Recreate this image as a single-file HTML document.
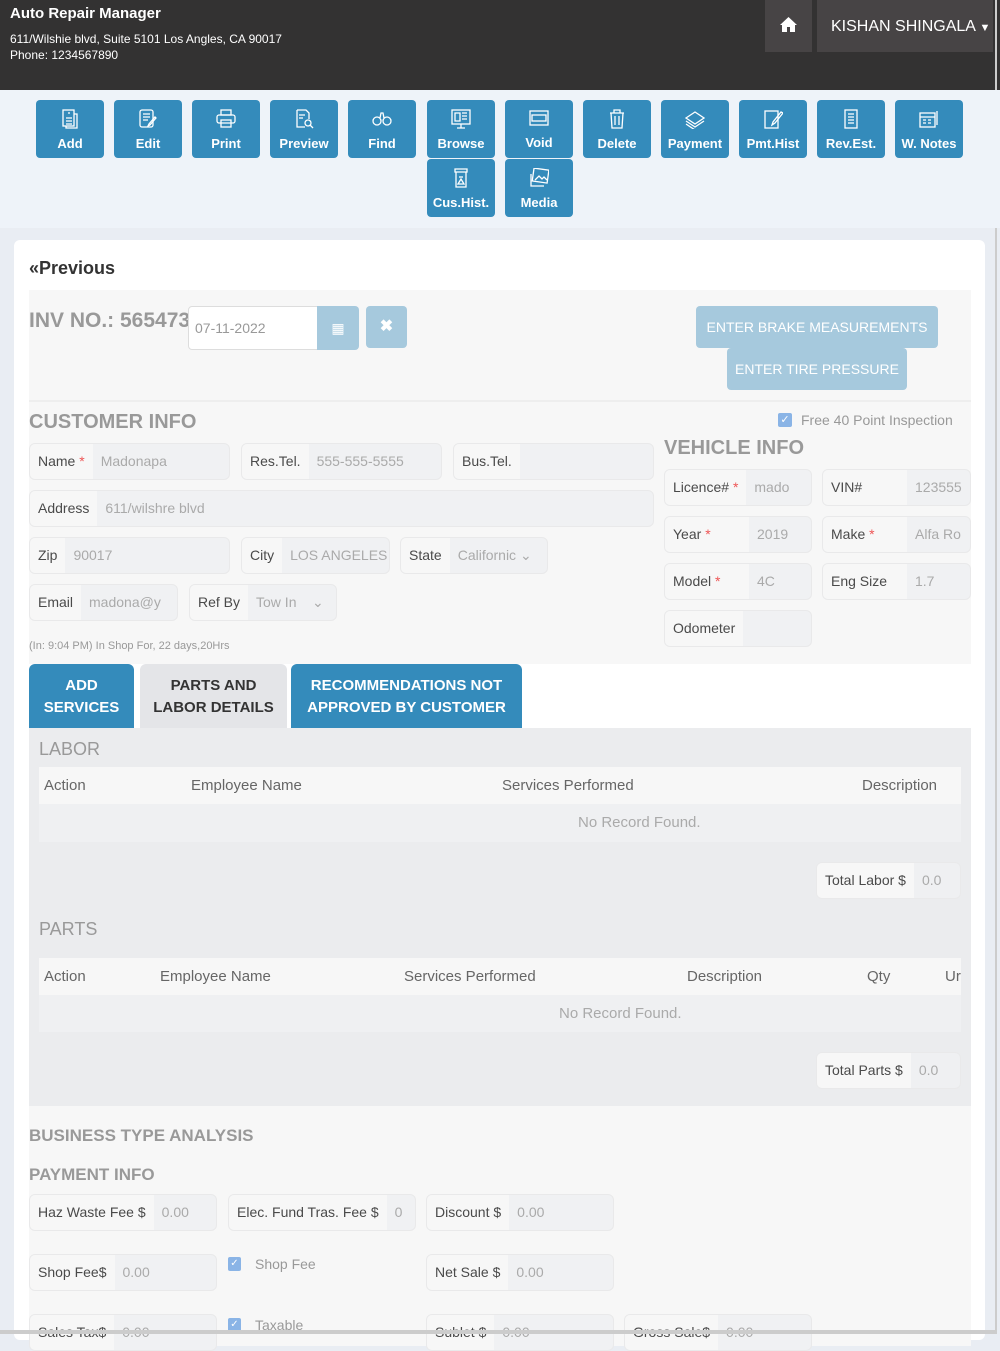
<!DOCTYPE html>
<html><head><meta charset="utf-8">
<style>
*{box-sizing:border-box;margin:0;padding:0}
body{width:1000px;height:1334px;overflow:hidden;background:#e9edf3;font-family:"Liberation Sans",sans-serif;position:relative;color:#444}
.a{position:absolute}
.hdr{left:0;top:0;width:1000px;height:90px;background:#333232;color:#fff}
.tb{left:0;top:90px;width:1000px;height:138px;background:#eef3f9}
.btn{position:absolute;width:68px;height:58px;background:#348bbb;border-radius:4px;color:#fff;font-size:13px;font-weight:bold;text-align:center}
.btn svg{position:absolute;left:24px;top:9px}
.btn span{position:absolute;left:0;right:0;top:36px}
.card{left:14px;top:240px;width:971px;height:1100px;background:#fff;border-radius:6px}
.f{position:absolute;height:37px;border:1px solid #e9e9ea;border-radius:6px;background:#f0f1f3;overflow:hidden;font-size:14px;white-space:nowrap}
.f b{display:inline-block;height:35px;line-height:35px;padding:0 8px;background:#f7f7f7;color:#4a4a4a;font-weight:normal;vertical-align:top}
.f i{font-style:normal;display:inline-block;line-height:35px;padding-left:8px;color:#aaa}
.r{color:#e55}
.h{font-weight:bold;color:#999;font-size:20px}
.lb{background:#a6c9dd;color:#fff;font-size:14px;text-align:center;border-radius:4px;line-height:42px}
.tab{position:absolute;top:664px;height:65px;border-radius:6px 6px 0 0;font-weight:bold;font-size:15px;text-align:center;line-height:22px;padding-top:11px}
.th{position:absolute;font-size:15px;color:#666}
</style></head><body>
<div class="a hdr">
 <div class="a" style="left:10px;top:5px;font-size:15px;font-weight:bold">Auto Repair Manager</div>
 <div class="a" style="left:10px;top:32px;font-size:12px">611/Wilshie blvd, Suite 5101 Los Angles, CA 90017</div>
 <div class="a" style="left:10px;top:48px;font-size:12px">Phone: 1234567890</div>
 <div class="a" style="left:765px;top:0;width:47px;height:52px;background:#474445">
  <svg class="a" style="left:14px;top:16px" width="19" height="17" viewBox="0 0 19 17"><path d="M9.5 1 L1 9 L3 9 L3 16 L8 16 L8 11 L11 11 L11 16 L16 16 L16 9 L18 9 Z" fill="#fff"/></svg>
 </div>
 <div class="a" style="left:817px;top:0;width:176px;height:52px;background:#474445;font-size:16px;line-height:54px;padding-left:14px">KISHAN SHINGALA <span style="font-size:11px">&#9660;</span></div>
 <div class="a" style="left:995px;top:0;width:2px;height:1334px;background:#ccc"></div>
</div>
<div class="a tb">
 <div class="btn" style="left:36px;top:10px"><svg width="20" height="20" viewBox="0 0 20 20" fill="none" stroke="#fff" stroke-width="1.3"><rect x="3" y="1" width="11" height="16"/><path d="M14 5h3v14H6v-2M6 9h6M6 12h6M6 15h6M8 4h2"/></svg><span>Add</span></div>
 <div class="btn" style="left:114px;top:10px"><svg width="20" height="20" viewBox="0 0 20 20" fill="none" stroke="#fff" stroke-width="1.3"><rect x="2" y="1" width="13" height="17" rx="2"/><path d="M5 5h7M5 8h7M5 11h5M18 9l-6 7-2 1 1-2 6-7z"/></svg><span>Edit</span></div>
 <div class="btn" style="left:192px;top:10px"><svg width="20" height="20" viewBox="0 0 20 20" fill="none" stroke="#fff" stroke-width="1.3"><rect x="5" y="1" width="10" height="5"/><rect x="1" y="6" width="18" height="8" rx="2"/><rect x="5" y="11" width="10" height="7"/></svg><span>Print</span></div>
 <div class="btn" style="left:270px;top:10px"><svg width="20" height="20" viewBox="0 0 20 20" fill="none" stroke="#fff" stroke-width="1.3"><path d="M3 1h9l3 3v6M3 1v17h8M5 6h6M5 9h4"/><circle cx="14" cy="14" r="3"/><path d="M16 16l3 3"/></svg><span>Preview</span></div>
 <div class="btn" style="left:348px;top:10px"><svg width="20" height="20" viewBox="0 0 20 20" fill="none" stroke="#fff" stroke-width="1.3"><circle cx="5" cy="12" r="4"/><circle cx="15" cy="12" r="4"/><path d="M8 9l1-5h2l1 5"/></svg><span>Find</span></div>
 <div class="btn" style="left:427px;top:10px"><svg width="20" height="20" viewBox="0 0 20 20" fill="none" stroke="#fff" stroke-width="1.3"><rect x="1" y="1" width="18" height="14"/><path d="M4 4h5v8H4zM11 4h5M11 7h5M11 10h5M10 15v4M6 19h8"/></svg><span>Browse</span></div>
 <div class="btn" style="left:505px;top:10px"><svg width="20" height="20" viewBox="0 0 20 20" fill="none" stroke="#fff" stroke-width="1.3"><rect x="1" y="2" width="18" height="14"/><rect x="3" y="6" width="14" height="6"/></svg><span style="top:35px">Void</span></div>
 <div class="btn" style="left:583px;top:10px"><svg width="20" height="20" viewBox="0 0 20 20" fill="none" stroke="#fff" stroke-width="1.3"><path d="M3 4h14M7 4V1h6v3M4 4l1 15h10l1-15M8 7v9M12 7v9"/></svg><span>Delete</span></div>
 <div class="btn" style="left:661px;top:10px"><svg width="20" height="20" viewBox="0 0 20 20" fill="none" stroke="#fff" stroke-width="1.3"><path d="M1 9l9-6 9 6-9 6zM1 12l9 6 9-6M1 15l9 6"/></svg><span>Payment</span></div>
 <div class="btn" style="left:739px;top:10px"><svg width="20" height="20" viewBox="0 0 20 20" fill="none" stroke="#fff" stroke-width="1.3"><rect x="2" y="2" width="13" height="17"/><path d="M18 3l-8 10-1 3 3-2 8-10z"/></svg><span>Pmt.Hist</span></div>
 <div class="btn" style="left:817px;top:10px"><svg width="20" height="20" viewBox="0 0 20 20" fill="none" stroke="#fff" stroke-width="1.3"><rect x="4" y="1" width="12" height="18"/><path d="M7 5h6M7 8h6M7 11h6M7 14h6"/></svg><span>Rev.Est.</span></div>
 <div class="btn" style="left:895px;top:10px"><svg width="20" height="20" viewBox="0 0 20 20" fill="none" stroke="#fff" stroke-width="1.3"><rect x="1" y="4" width="15" height="14"/><path d="M1 8h15M4 11h3M9 11h3M4 14h3M9 14h3M18 2v14"/></svg><span>W. Notes</span></div>
 <div class="btn" style="left:427px;top:69px"><svg width="20" height="20" viewBox="0 0 20 20" fill="none" stroke="#fff" stroke-width="1.3"><path d="M4 1h12v3H4zM5 4v15h10V4M8 9l4 0M7 16l3-5 3 5z"/></svg><span>Cus.Hist.</span></div>
 <div class="btn" style="left:505px;top:69px"><svg width="20" height="20" viewBox="0 0 20 20" fill="none" stroke="#fff" stroke-width="1.3"><rect x="4" y="1" width="15" height="13" transform="rotate(8 11 8)"/><path d="M2 6v12h13M6 12l4-4 3 3 2-2 3 3"/></svg><span>Media</span></div>
</div>
<div class="a card"></div>
<div class="a" style="left:29px;top:258px;font-size:18px;font-weight:bold;color:#333">«Previous</div>
<div class="a" style="left:29px;top:290px;width:942px;height:374px;background:#f7f7f7"></div>
<div class="a" style="left:29px;top:400px;width:942px;height:2px;background:#eee"></div>
<div class="a h" style="left:29px;top:309px;font-size:21px">INV NO.: 565473</div>
<div class="a" style="left:188px;top:306px;width:130px;height:44px;background:#fff;border:1px solid #ddd;border-radius:4px 0 0 4px;font-size:14px;color:#999;line-height:42px;padding-left:6px">07-11-2022</div>
<div class="a" style="left:317px;top:306px;width:42px;height:44px;background:#a6c9dd;border-radius:0 4px 4px 0;color:#fff;text-align:center;line-height:44px;font-size:14px">&#9638;</div>
<div class="a" style="left:366px;top:306px;width:41px;height:42px;background:#a6c9dd;border-radius:4px;color:#fff;text-align:center;line-height:42px;font-weight:bold">&#10006;</div>
<div class="a lb" style="left:696px;top:306px;width:242px">ENTER BRAKE MEASUREMENTS</div>
<div class="a lb" style="left:727px;top:348px;width:180px">ENTER TIRE PRESSURE</div>
<div class="a h" style="left:29px;top:411px">CUSTOMER INFO</div>
<div class="a" style="left:778px;top:413px;width:14px;height:14px;background:#8ab4e6;border-radius:2px;color:#fff;font-size:11px;text-align:center;line-height:14px">&#10003;</div>
<div class="a" style="left:801px;top:412px;font-size:14px;color:#999">Free 40 Point Inspection</div>
<div class="a h" style="left:664px;top:437px">VEHICLE INFO</div>

<div class="f" style="left:29px;top:443px;width:201px"><b>Name <span class="r">*</span></b><i>Madonapa</i></div>
<div class="f" style="left:241px;top:443px;width:201px"><b>Res.Tel.</b><i>555-555-5555</i></div>
<div class="f" style="left:453px;top:443px;width:201px"><b>Bus.Tel.</b><i></i></div>
<div class="f" style="left:29px;top:490px;width:625px"><b>Address</b><i>611/wilshre blvd</i></div>
<div class="f" style="left:29px;top:537px;width:201px"><b>Zip</b><i>90017</i></div>
<div class="f" style="left:241px;top:537px;width:149px"><b>City</b><i>LOS ANGELES</i></div>
<div class="f" style="left:400px;top:537px;width:148px"><b>State</b><i>Californic ⌄</i></div>
<div class="f" style="left:29px;top:584px;width:149px"><b>Email</b><i>madona@y</i></div>
<div class="f" style="left:189px;top:584px;width:148px"><b>Ref By</b><i>Tow In &nbsp;&nbsp;&nbsp;⌄</i></div>
<div class="a" style="left:29px;top:640px;font-size:11px;color:#999">(In: 9:04 PM) In Shop For, 22 days,20Hrs</div>

<div class="f" style="left:664px;top:469px;width:148px"><b>Licence# <span class="r">*</span></b><i>mado</i></div>
<div class="f" style="left:822px;top:469px;width:149px"><b style="width:84px">VIN#</b><i>123555</i></div>
<div class="f" style="left:664px;top:516px;width:148px"><b style="width:84px">Year <span class="r">*</span></b><i>2019</i></div>
<div class="f" style="left:822px;top:516px;width:149px"><b style="width:84px">Make <span class="r">*</span></b><i>Alfa Ro</i></div>
<div class="f" style="left:664px;top:563px;width:148px"><b style="width:84px">Model <span class="r">*</span></b><i>4C</i></div>
<div class="f" style="left:822px;top:563px;width:149px"><b style="width:84px">Eng Size</b><i>1.7</i></div>
<div class="f" style="left:664px;top:610px;width:148px"><b>Odometer</b><i></i></div>

<div class="tab" style="left:29px;width:105px;background:#348bbb;color:#fff">ADD<br>SERVICES</div>
<div class="tab" style="left:140px;width:147px;background:#e4e5e8;color:#333">PARTS AND<br>LABOR DETAILS</div>
<div class="tab" style="left:291px;width:231px;background:#348bbb;color:#fff">RECOMMENDATIONS NOT<br>APPROVED BY CUSTOMER</div>

<div class="a" style="left:29px;top:728px;width:942px;height:378px;background:#ebecee"></div>
<div class="a" style="left:39px;top:739px;font-size:18px;color:#999">LABOR</div>
<div class="a" style="left:39px;top:767px;width:922px;height:37px;background:#f7f7f7"></div>
<div class="a" style="left:39px;top:804px;width:922px;height:38px;background:#eff0f2"></div>
<div class="th" style="left:44px;top:777px">Action</div>
<div class="th" style="left:191px;top:777px">Employee Name</div>
<div class="th" style="left:502px;top:777px">Services Performed</div>
<div class="th" style="left:862px;top:777px">Description</div>
<div class="th" style="left:578px;top:814px;color:#aaa">No Record Found.</div>
<div class="f" style="left:816px;top:862px;width:145px;background:#eff0f2"><b>Total Labor $</b><i>0.0</i></div>

<div class="a" style="left:39px;top:919px;font-size:18px;color:#999">PARTS</div>
<div class="a" style="left:39px;top:958px;width:922px;height:37px;background:#f7f7f7"></div>
<div class="a" style="left:39px;top:995px;width:922px;height:37px;background:#eff0f2"></div>
<div class="th" style="left:44px;top:968px">Action</div>
<div class="th" style="left:160px;top:968px">Employee Name</div>
<div class="th" style="left:404px;top:968px">Services Performed</div>
<div class="th" style="left:687px;top:968px">Description</div>
<div class="th" style="left:867px;top:968px">Qty</div>
<div class="th" style="left:945px;top:968px">Ur</div>
<div class="th" style="left:559px;top:1005px;color:#aaa">No Record Found.</div>
<div class="f" style="left:816px;top:1052px;width:145px;background:#eff0f2"><b>Total Parts $</b><i>0.0</i></div>

<div class="a" style="left:29px;top:1106px;width:942px;height:240px;background:#f7f7f7"></div>
<div class="a" style="left:29px;top:1126px;font-size:17px;font-weight:bold;color:#999">BUSINESS TYPE ANALYSIS</div>
<div class="a" style="left:29px;top:1165px;font-size:17px;font-weight:bold;color:#999">PAYMENT INFO</div>
<div class="f" style="left:29px;top:1194px;width:188px"><b>Haz Waste Fee $</b><i>0.00</i></div>
<div class="f" style="left:228px;top:1194px;width:188px"><b>Elec. Fund Tras. Fee $</b><i>0</i></div>
<div class="f" style="left:426px;top:1194px;width:188px"><b>Discount $</b><i>0.00</i></div>
<div class="f" style="left:29px;top:1254px;width:188px"><b>Shop Fee$</b><i>0.00</i></div>
<div class="a" style="left:228px;top:1257px;width:13px;height:14px;background:#8ab4e6;border-radius:2px;color:#fff;font-size:10px;text-align:center;line-height:14px">&#10003;</div>
<div class="a" style="left:255px;top:1256px;font-size:14px;color:#999">Shop Fee</div>
<div class="f" style="left:426px;top:1254px;width:188px"><b>Net Sale $</b><i>0.00</i></div>
<div class="f" style="left:29px;top:1314px;width:188px"><b>Sales Tax$</b><i>0.00</i></div>
<div class="a" style="left:228px;top:1318px;width:13px;height:14px;background:#8ab4e6;border-radius:2px;color:#fff;font-size:10px;text-align:center;line-height:14px">&#10003;</div>
<div class="a" style="left:255px;top:1317px;font-size:14px;color:#999">Taxable</div>
<div class="f" style="left:426px;top:1314px;width:188px"><b>Sublet $</b><i>0.00</i></div>
<div class="f" style="left:624px;top:1314px;width:188px"><b>Gross Sale$</b><i>0.00</i></div>
<div class="a" style="left:0;top:1330px;width:995px;height:4px;background:#ccc"></div>
</body></html>
